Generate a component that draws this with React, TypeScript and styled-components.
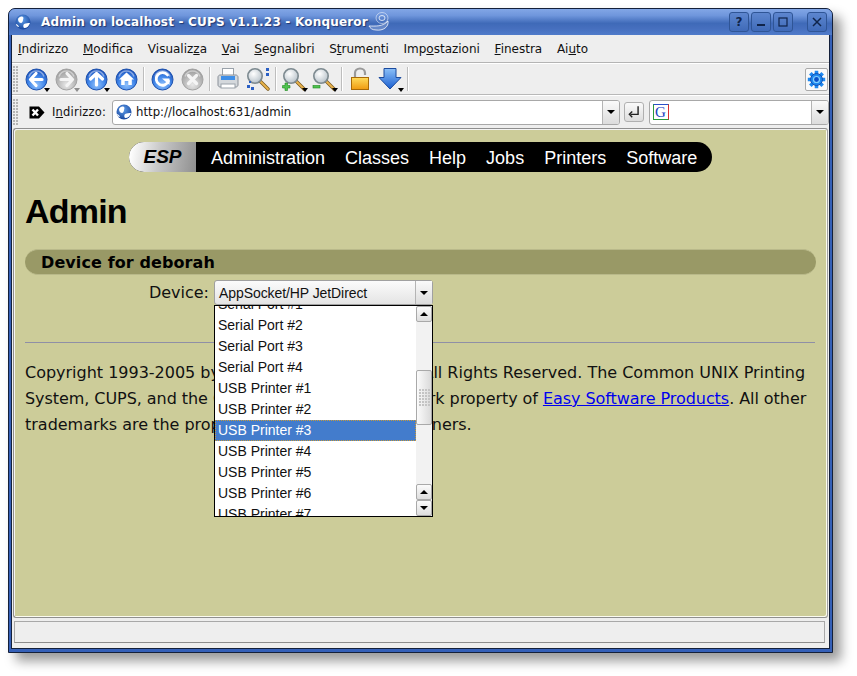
import React from 'react';
import styled, { createGlobalStyle } from 'styled-components';

const GlobalStyle = createGlobalStyle`
  html, body {
    margin: 0;
    padding: 0;
    background: #fff;
  }
`;

const UI_FONT = `"DejaVu Sans", sans-serif`;
const WEB_FONT = `"Liberation Sans", Arial, sans-serif`;

const Page = styled.div`
  width: 857px;
  height: 676px;
  padding: 8px 0 0 8px;
  box-sizing: border-box;
  overflow: hidden;
`;

const Window = styled.div`
  width: 825px;
  height: 645px;
  box-sizing: border-box;
  display: flex;
  flex-direction: column;
  border: 1px solid #14203a;
  border-radius: 7px 7px 0 0;
  background: #3560b8;
  box-shadow: 8px 8px 12px rgba(0, 0, 0, 0.4);
`;

const TitleBar = styled.div`
  height: 26px;
  flex: none;
  display: flex;
  align-items: center;
  padding: 0 5px 0 6px;
  border-radius: 6px 6px 0 0;
  background: linear-gradient(#82a6e6 0%, #6f96dc 25%, #3f6ab8 55%, #466fbe 75%, #4f7bca 100%);
  color: #fff;
  font: bold 12px ${UI_FONT};
  letter-spacing: 0.2px;
`;

const TitleText = styled.span`
  margin-left: 10px;
  white-space: nowrap;
  text-shadow: 1px 1px 1px rgba(0, 0, 40, 0.5);
`;

const TitleSpacer = styled.div`
  flex: 1;
`;

const WinButtons = styled.div`
  display: flex;
  gap: 2px;
  margin-top: -1px;
`;

const WinButton = styled.div<{ $gap?: boolean }>`
  width: 20px;
  height: 20px;
  box-sizing: border-box;
  display: flex;
  align-items: center;
  justify-content: center;
  margin-left: ${p => (p.$gap ? '12px' : '0')};
  border: 1px solid #2f5596;
  border-radius: 3px;
  background: linear-gradient(#5d86cf, #3f6ab8);
  color: #10244a;
  font: bold 12px ${UI_FONT};
`;

const Client = styled.div`
  flex: 1;
  min-height: 0;
  display: flex;
  flex-direction: column;
  margin: 0 2px 3px;
  border: 1px solid #14203a;
  border-top: 0;
  background: #eeeeee;
`;

const MenuBar = styled.div`
  height: 28px;
  flex: none;
  display: flex;
  align-items: center;
  gap: 14.7px;
  padding-left: 6px;
  box-sizing: border-box;
  border-bottom: 1px solid #b4b4b4;
  color: #111;
  font: 12px ${UI_FONT};
`;

const ToolBar = styled.div`
  height: 32px;
  flex: none;
  display: flex;
  align-items: center;
  padding: 0 1px 0 1px;
  box-sizing: border-box;
  border-top: 1px solid #fff;
  border-bottom: 1px solid #b8b8b8;
`;

const Handle = styled.div`
  width: 6px;
  height: 26px;
  flex: none;
  margin-right: 2px;
  background-image: radial-gradient(circle at 1px 1px, #b4b4b4 1px, transparent 1px);
  background-size: 3px 3px;
`;

const ToolButton = styled.div`
  width: 30px;
  height: 28px;
  flex: none;
  position: relative;
  display: flex;
  align-items: center;
  justify-content: center;
`;

const DropMark = styled.span<{ $dim?: boolean }>`
  position: absolute;
  right: 1px;
  bottom: 1px;
  width: 0;
  height: 0;
  border-left: 3.5px solid transparent;
  border-right: 3.5px solid transparent;
  border-top: 4px solid ${p => (p.$dim ? '#8c8c8c' : '#000')};
`;

const Separator = styled.div`
  width: 1px;
  height: 24px;
  flex: none;
  margin: 0 2px 0 2px;
  background: #bdbdbd;
  border-right: 1px solid #fff;
`;

const GearButton = styled.div`
  width: 23px;
  height: 23px;
  box-sizing: border-box;
  margin-left: auto;
  display: flex;
  align-items: center;
  justify-content: center;
  border: 1px solid #aaa;
  border-radius: 2px;
  background: #fafafa;
`;

const LocationBar = styled.div`
  height: 33px;
  flex: none;
  display: flex;
  align-items: center;
  padding: 0 1px;
  box-sizing: border-box;
  border-top: 1px solid #fff;
`;

const ClearIcon = styled.svg`
  flex: none;
  margin-left: 8px;
`;

const LocationLabel = styled.span`
  margin: 0 6px 0 7px;
  color: #111;
  font: 11.5px ${UI_FONT};
  letter-spacing: 0.2px;
`;

const Combo = styled.div<{ $width: number }>`
  width: ${p => p.$width}px;
  height: 25px;
  flex: none;
  box-sizing: border-box;
  display: flex;
  align-items: center;
  padding-left: 3px;
  border: 1px solid #a8a8a8;
  border-radius: 3px;
  background: #fff;
  overflow: hidden;
`;

const ComboText = styled.span`
  flex: 1;
  margin-left: 4px;
  color: #111;
  font: 11.7px ${UI_FONT};
`;

const ComboArrow = styled.div`
  width: 16px;
  height: 100%;
  flex: none;
  display: flex;
  align-items: center;
  justify-content: center;
  border-left: 1px solid #b4b4b4;
  background: linear-gradient(#fafafa, #dcdcdc);
`;

const Tri = styled.span`
  width: 0;
  height: 0;
  border-left: 4px solid transparent;
  border-right: 4px solid transparent;
  border-top: 4px solid #000;
`;

const EnterButton = styled.div`
  width: 20px;
  height: 20px;
  flex: none;
  box-sizing: border-box;
  margin: 0 5px 0 4px;
  display: flex;
  align-items: center;
  justify-content: center;
  border: 1px solid #b0b0b0;
  border-radius: 3px;
  background: linear-gradient(#fafafa, #dddddd);
`;

const Content = styled.div`
  height: 490px;
  flex: none;
  box-sizing: border-box;
  margin: 0 1px;
  padding: 13px 11px 0 11px;
  border: 1px solid #8f8f8f;
  border-right-color: #a0a0a0;
  border-radius: 3px;
  background: #cccc99;
  box-shadow: inset 1px 1px 0 #f4f4f4, inset -1px -1px 0 #fbfbf0;
`;

const NavBar = styled.div`
  width: 583px;
  height: 30px;
  margin: 0 auto;
  display: flex;
  align-items: center;
  border-radius: 15px;
  overflow: hidden;
  background: #000;
  color: #fff;
  font: 18px ${WEB_FONT};
`;

const NavLogo = styled.div`
  width: 67px;
  height: 100%;
  flex: none;
  display: flex;
  align-items: center;
  justify-content: center;
  margin-right: 15px;
  background: linear-gradient(100deg, #fdfdfd 5%, #c8c8c8 45%, #8f8f8f 100%);
  color: #000;
  font: italic bold 19px ${WEB_FONT};
`;

const NavLink = styled.span`
  margin-right: 20px;
  padding-top: 2px;
`;

const PageTitle = styled.h1`
  margin: 19px 0 0 0;
  height: 40px;
  color: #000;
  font: bold 34px/40px ${WEB_FONT};
  letter-spacing: -0.8px;
`;

const SectionBand = styled.div`
  height: 26px;
  margin-top: 18px;
  box-sizing: border-box;
  padding: 1px 0 0 16px;
  display: flex;
  align-items: center;
  border-top: 1px solid #b9b98a;
  border-bottom: 1px solid #b9b98a;
  border-radius: 13px;
  background: #999966;
  color: #000;
  font: bold 16px ${UI_FONT};
  letter-spacing: 0.1px;
`;

const FormRow = styled.div`
  height: 25px;
  margin-top: 5px;
  display: flex;
  align-items: center;
  position: relative;
`;

const FieldLabel = styled.span`
  width: 184px;
  margin-right: 5px;
  text-align: right;
  color: #111;
  font: 16px ${UI_FONT};
`;

const SelectBox = styled.div`
  width: 219px;
  height: 25px;
  box-sizing: border-box;
  display: flex;
  align-items: center;
  border: 1px solid #a0a0a0;
  border-radius: 3px;
  background: linear-gradient(#fbfbfb, #e4e4e4);
  color: #111;
  font: 14px ${WEB_FONT};
  letter-spacing: -0.08px;
`;

const SelectText = styled.span`
  flex: 1;
  margin-left: 4px;
`;

const SelectPopup = styled.div`
  position: absolute;
  left: 189px;
  top: 25px;
  width: 219px;
  height: 212px;
  box-sizing: border-box;
  display: flex;
  border: 1px solid #000;
  background: #fff;
  z-index: 2;
`;

const OptionList = styled.div`
  flex: 1;
  height: 100%;
  overflow: hidden;
`;

const OptionScroll = styled.div`
  margin-top: -12px;
`;

const Option = styled.div<{ $selected?: boolean }>`
  height: 21px;
  box-sizing: border-box;
  padding-left: 3px;
  white-space: nowrap;
  font: 14px/21px ${WEB_FONT};
  color: ${p => (p.$selected ? '#fff' : '#111')};
  background: ${p => (p.$selected ? '#437ccc' : 'transparent')};
  outline: ${p => (p.$selected ? '1px dotted #c89a3a' : 'none')};
  outline-offset: -1px;
`;

const ScrollBar = styled.div`
  width: 16px;
  flex: none;
  display: flex;
  flex-direction: column;
  background-color: #f2f2f2;
  background-image: radial-gradient(circle at 1px 1px, #dcdcdc 0.7px, transparent 0.7px);
  background-size: 2px 2px;
`;

const ScrollButton = styled.div`
  height: 16px;
  flex: none;
  box-sizing: border-box;
  display: flex;
  align-items: center;
  justify-content: center;
  border: 1px solid #a9a9a9;
  border-radius: 2px;
  background: linear-gradient(#fbfbfb, #dedede);
`;

const TriUp = styled.span`
  width: 0;
  height: 0;
  border-left: 4px solid transparent;
  border-right: 4px solid transparent;
  border-bottom: 4px solid #000;
`;

const ScrollTrack = styled.div`
  flex: 1;
  display: flex;
  flex-direction: column;
`;

const ScrollThumb = styled.div`
  height: 55px;
  margin-top: 48px;
  box-sizing: border-box;
  display: flex;
  align-items: center;
  justify-content: center;
  border: 1px solid #a9a9a9;
  border-radius: 2px;
  background: linear-gradient(90deg, #fbfbfb, #dadada);
`;

const Grip = styled.div`
  width: 11px;
  height: 18px;
  background-image: radial-gradient(circle at 1px 1px, #c4c4c4 0.8px, transparent 0.8px);
  background-size: 3px 3px;
`;

const Rule = styled.hr`
  height: 1px;
  margin: 37px 1px 0 0;
  border: 0;
  background: #8f8fa6;
`;

const Paragraph = styled.p`
  margin: 17px 0 0 0;
  color: #111;
  font: 16px/26px ${UI_FONT};
  letter-spacing: -0.01px;
  white-space: nowrap;
`;

const TightLine = styled.span`
  letter-spacing: -0.06px;
`;

const Link = styled.a`
  color: #0000ee;
  text-decoration: underline;
`;

const StatusBar = styled.div`
  height: 22px;
  flex: none;
  box-sizing: border-box;
  margin: 3px 4px 0 2px;
  border: 1px solid #a8a8a8;
  border-bottom-color: #8c8c8c;
  background: #eeeeee;
`;

const Ball: React.FC<{ id: string; dim?: boolean; children?: React.ReactNode }> = ({ id, dim, children }) => (
  <svg width="23" height="23" viewBox="0 0 23 23">
    <defs>
      <radialGradient id={id} cx="50%" cy="75%" r="70%">
        <stop offset="0" stopColor={dim ? '#e8e8e8' : '#8fc0fb'} />
        <stop offset="0.55" stopColor={dim ? '#bcbcbc' : '#4388ea'} />
        <stop offset="1" stopColor={dim ? '#9c9c9c' : '#1c52bc'} />
      </radialGradient>
    </defs>
    <circle cx="11.5" cy="11.5" r="10.5" fill={`url(#${id})`} stroke={dim ? '#a2a2a2' : '#1c50ac'} />
    <path d="M4 8.500C5.500 4.500 8.500 3 11.500 3s6 1.500 7.500 5.500" fill="none" stroke="#fff" strokeOpacity="0.45" strokeWidth="1.500" />
    {children}
  </svg>
);

const Magnifier: React.FC<{ id: string; children?: React.ReactNode }> = ({ id, children }) => (
  <svg width="24" height="24" viewBox="0 0 24 24">
    <defs>
      <radialGradient id={id} cx="40%" cy="35%" r="70%">
        <stop offset="0" stopColor="#ffffff" />
        <stop offset="1" stopColor="#b5c0c8" />
      </radialGradient>
    </defs>
    <line x1="14" y1="14" x2="22" y2="22" stroke="#7a5a1e" strokeWidth="3.4" strokeLinecap="round" />
    <line x1="14" y1="14" x2="22" y2="22" stroke="#eab44c" strokeWidth="1.8" strokeLinecap="round" />
    <circle cx="9" cy="9" r="7.2" fill={`url(#${id})`} stroke="#7d8a90" strokeWidth="1.6" />
    {children}
  </svg>
);

const Globe: React.FC<{ id: string; size: number }> = ({ id, size }) => (
  <svg width={size} height={size} viewBox="0 0 16 16">
    <defs>
      <radialGradient id={id} cx="45%" cy="35%" r="70%">
        <stop offset="0" stopColor="#5f9eea" />
        <stop offset="1" stopColor="#123f98" />
      </radialGradient>
    </defs>
    <circle cx="8" cy="8" r="7.5" fill={`url(#${id})`} />
    <path d="M3 5c1-2 3-3 5-2 1 1 0 2 0 3s-1 3-2 3-3-1-3-4zM9 10c2-1 4-1 6-1-1 3-3 5-6 5-1-1-1-3 0-4zM1 10c1 0 3 2 3 3-1 0-3-1-3-3z" fill="#fff" />
  </svg>
);

const menuItems: React.ReactNode[] = [
  <><u>I</u>ndirizzo</>,
  <><u>M</u>odifica</>,
  <>Visualiz<u>z</u>a</>,
  <><u>V</u>ai</>,
  <><u>S</u>egnalibri</>,
  <>S<u>t</u>rumenti</>,
  <>Imp<u>o</u>stazioni</>,
  <><u>F</u>inestra</>,
  <>Ai<u>u</u>to</>,
];

const options = [
  'Serial Port #1', 'Serial Port #2', 'Serial Port #3', 'Serial Port #4',
  'USB Printer #1', 'USB Printer #2', 'USB Printer #3', 'USB Printer #4',
  'USB Printer #5', 'USB Printer #6', 'USB Printer #7',
];

const navLinks = ['Administration', 'Classes', 'Help', 'Jobs', 'Printers', 'Software'];

export default function App() {
  return (
    <Page>
      <GlobalStyle />
      <Window>
        <TitleBar>
          <Globe id="titleGlobe" size={16} />
          <TitleText>Admin on localhost - CUPS v1.1.23 - Konqueror</TitleText>
          <svg width="24" height="24" viewBox="0 0 24 24" fill="none" stroke="#fff" strokeOpacity="0.75">
            <ellipse cx="14" cy="8" rx="3" ry="2.5" />
            <ellipse cx="14" cy="8" rx="6" ry="5.5" strokeOpacity="0.5" />
            <path d="M1 16c6 0 14 1 19-5 1 6-5 10-12 9-4 0-6-2-7-4z" fill="#fff" fillOpacity="0.18" />
          </svg>
          <TitleSpacer />
          <WinButtons>
            <WinButton>?</WinButton>
            <WinButton>
              <svg width="10" height="10" viewBox="0 0 10 10"><rect x="1" y="7" width="8" height="2" fill="#10244a" /></svg>
            </WinButton>
            <WinButton>
              <svg width="10" height="10" viewBox="0 0 10 10"><rect x="1" y="1" width="8" height="8" fill="none" stroke="#10244a" strokeWidth="1.2" /></svg>
            </WinButton>
            <WinButton $gap>
              <svg width="10" height="10" viewBox="0 0 10 10"><path d="M1 1l8 8M9 1l-8 8" stroke="#10244a" strokeWidth="1.5" /></svg>
            </WinButton>
          </WinButtons>
        </TitleBar>
        <Client>
          <MenuBar>
            {menuItems.map((item, i) => <span key={i}>{item}</span>)}
          </MenuBar>
          <ToolBar>
            <Handle />
            <ToolButton>
              <Ball id="b1">
                <path d="M11 5.500l-5.500 6 5.500 6M6 11.500h11" fill="none" stroke="#fff" strokeWidth="3.2" strokeLinecap="round" strokeLinejoin="round" />
              </Ball>
              <DropMark />
            </ToolButton>
            <ToolButton>
              <Ball id="b2" dim>
                <path d="M12 5.500l5.500 6-5.500 6M17 11.500H6" fill="none" stroke="#f4f4f4" strokeWidth="3.2" strokeLinecap="round" strokeLinejoin="round" />
              </Ball>
              <DropMark $dim />
            </ToolButton>
            <ToolButton>
              <Ball id="b3">
                <path d="M5.500 11l6-5.500 6 5.500M11.500 6v11" fill="none" stroke="#fff" strokeWidth="3.2" strokeLinecap="round" strokeLinejoin="round" />
              </Ball>
              <DropMark />
            </ToolButton>
            <ToolButton>
              <Ball id="b4"><path d="M11.500 4.500l7.500 7h-2.200V17h-3.500v-4h-3.600v4H6.200v-5.500H4z" fill="#fff" /></Ball>
            </ToolButton>
            <Separator />
            <ToolButton>
              <Ball id="b5">
                <path d="M16.500 7a6.300 6.300 0 1 0 1 6" fill="none" stroke="#fff" strokeWidth="2.800" strokeLinecap="round" />
                <path d="M11 10.500h7.500v6.500z" fill="#fff" />
              </Ball>
            </ToolButton>
            <ToolButton>
              <Ball id="b6" dim><path d="M7.500 7.500l8 8M15.500 7.500l-8 8" stroke="#f5f5f5" strokeWidth="3.200" strokeLinecap="round" /></Ball>
            </ToolButton>
            <Separator />
            <ToolButton>
              <svg width="24" height="24" viewBox="0 0 24 24">
                <rect x="6.500" y="1.500" width="11" height="10" fill="#fff" stroke="#9aa2aa" />
                <path d="M2 10c0-1 1-2 2-2h16c1 0 2 1 2 2v8c0 1-1 2-2 2H4c-1 0-2-1-2-2z" fill="#d4d8dc" stroke="#8a9098" />
                <rect x="5" y="9" width="14" height="4" fill="#3f8fe8" />
                <rect x="5" y="17" width="14" height="4" fill="#fff" stroke="#9aa2aa" />
              </svg>
            </ToolButton>
            <ToolButton>
              <Magnifier id="m1">
                <g fill="#2a5fc4">
                  <rect x="20" y="1" width="3" height="3" />
                  <rect x="20" y="6" width="3" height="3" />
                  <rect x="1" y="18" width="3" height="3" />
                  <rect x="5" y="20" width="3" height="3" />
                  <rect x="3" y="14" width="2" height="2" />
                </g>
              </Magnifier>
            </ToolButton>
            <Separator />
            <ToolButton>
              <Magnifier id="m2">
                <path d="M3 16h2.500v2.500H8V21H5.500v2.500H3V21H.5v-2.500H3z" fill="#4fc24f" stroke="#1e8a1e" strokeWidth="0.6" />
              </Magnifier>
              <DropMark />
            </ToolButton>
            <ToolButton>
              <Magnifier id="m3">
                <rect x="1" y="18.500" width="7" height="2.500" fill="#4fc24f" stroke="#1e8a1e" strokeWidth="0.6" />
              </Magnifier>
              <DropMark />
            </ToolButton>
            <Separator />
            <ToolButton>
              <svg width="22" height="24" viewBox="0 0 22 24">
                <defs>
                  <linearGradient id="lockBody" x1="0" y1="0" x2="0" y2="1">
                    <stop offset="0" stopColor="#ffdc5c" />
                    <stop offset="1" stopColor="#f09a10" />
                  </linearGradient>
                </defs>
                <path d="M6 11V6c0-2.500 2-4.500 5-4.500s5 2 5 4.500v2" fill="none" stroke="#9a9a9a" strokeWidth="2.200" />
                <rect x="2.500" y="10.500" width="17" height="12" fill="url(#lockBody)" stroke="#a86a08" />
              </svg>
            </ToolButton>
            <ToolButton>
              <svg width="24" height="24" viewBox="0 0 24 24">
                <defs>
                  <linearGradient id="bmArrow" x1="0" y1="0" x2="0" y2="1">
                    <stop offset="0" stopColor="#8cc0f8" />
                    <stop offset="1" stopColor="#1a5fd0" />
                  </linearGradient>
                </defs>
                <path d="M6 1.500h12v9h5L12 22 1 10.500h5z" fill="url(#bmArrow)" stroke="#1a4a9e" />
              </svg>
              <DropMark />
            </ToolButton>
            <Separator />
            <GearButton>
              <svg width="19" height="19" viewBox="0 0 24 24">
                <g stroke="#1e88f0" strokeWidth="4.500">
                  <path d="M12 1v22M1 12h22M4.200 4.200l15.600 15.600M19.800 4.200L4.200 19.800" />
                </g>
                <circle cx="12" cy="12" r="7.500" fill="#1e88f0" stroke="#0a3ea0" />
                <circle cx="12" cy="12" r="3.800" fill="#0a50c8" stroke="#7fd0ff" strokeWidth="1.500" />
              </svg>
            </GearButton>
          </ToolBar>
          <LocationBar>
            <Handle />
            <ClearIcon width="16" height="13" viewBox="0 0 16 13">
              <path d="M0.500 0.500h9.500l5.500 6-5.500 6H.5z" fill="#000" />
              <path d="M3.500 3.500l5.500 6M9 3.500l-5.500 6" stroke="#fff" strokeWidth="2.400" />
            </ClearIcon>
            <LocationLabel>I<u>n</u>dirizzo:</LocationLabel>
            <Combo $width={508}>
              <Globe id="urlGlobe" size={16} />
              <ComboText>http://localhost:631/admin</ComboText>
              <ComboArrow><Tri /></ComboArrow>
            </Combo>
            <EnterButton>
              <svg width="14" height="14" viewBox="0 0 12 12" fill="none" stroke="#222" strokeWidth="1.200">
                <path d="M9.500 1v7H3" />
                <path d="M4.500 5.500L2 8l2.500 2.500" />
              </svg>
            </EnterButton>
            <Combo $width={180}>
              <svg width="16" height="16" viewBox="0 0 16 16">
                <rect x="0.500" y="0.500" width="15" height="15" fill="#fff" stroke="#2a9a3a" />
                <path d="M0.500 0.500h15" stroke="#2a50c8" />
                <path d="M15.500 0.500v15" stroke="#d83030" />
                <text x="2" y="13" fontFamily="'Liberation Serif', serif" fontSize="15" fill="#2040c0">G</text>
              </svg>
              <ComboText />
              <ComboArrow><Tri /></ComboArrow>
            </Combo>
          </LocationBar>
          <Content>
            <NavBar>
              <NavLogo>ESP</NavLogo>
              {navLinks.map(link => <NavLink key={link}>{link}</NavLink>)}
            </NavBar>
            <PageTitle>Admin</PageTitle>
            <SectionBand>Device for deborah</SectionBand>
            <FormRow>
              <FieldLabel>Device:</FieldLabel>
              <SelectBox>
                <SelectText>AppSocket/HP JetDirect</SelectText>
                <ComboArrow><Tri /></ComboArrow>
              </SelectBox>
              <SelectPopup>
                <OptionList>
                  <OptionScroll>
                    {options.map(option => (
                      <Option key={option} $selected={option === 'USB Printer #3'}>{option}</Option>
                    ))}
                  </OptionScroll>
                </OptionList>
                <ScrollBar>
                  <ScrollButton><TriUp /></ScrollButton>
                  <ScrollTrack>
                    <ScrollThumb><Grip /></ScrollThumb>
                  </ScrollTrack>
                  <ScrollButton><TriUp /></ScrollButton>
                  <ScrollButton><Tri /></ScrollButton>
                </ScrollBar>
              </SelectPopup>
            </FormRow>
            <Rule />
            <Paragraph>
              Copyright 1993-2005 by Easy Software Products, All Rights Reserved. The Common UNIX Printing<br />
              <TightLine>System, CUPS, and the CUPS logo are the trademark property of <Link href="#">Easy Software Products</Link>. All other</TightLine><br />
              trademarks are the property of their respective owners.
            </Paragraph>
          </Content>
          <StatusBar />
        </Client>
      </Window>
    </Page>
  );
}
